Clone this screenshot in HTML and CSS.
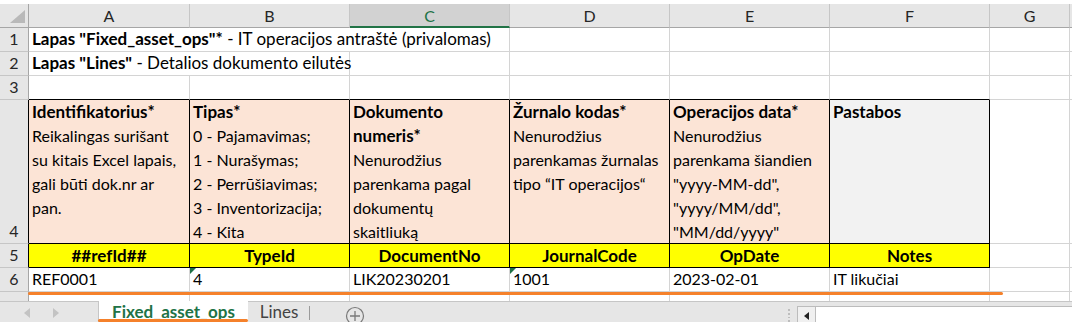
FILE: index.html
```html
<!DOCTYPE html>
<html lang="lt">
<head>
<meta charset="utf-8">
<title>Fixed_asset_ops</title>
<link rel="stylesheet" href="styles.css">
</head>
<body>
<div class="app">
  <div class="sheet">
    <!-- column headers -->
    <div class="corner"><span class="corner-tri"></span></div>
    <div class="ch">A</div>
    <div class="ch">B</div>
    <div class="ch sel">C</div>
    <div class="ch">D</div>
    <div class="ch">E</div>
    <div class="ch">F</div>
    <div class="ch">G</div>
    <div class="ch last"></div>

    <!-- row 1 -->
    <div class="rh">1</div>
    <div class="c span3 intro"><span><b>Lapas "Fixed_asset_ops"*</b> - IT operacijos antraštė (privalomas)</span></div>
    <div class="c"></div><div class="c"></div><div class="c"></div><div class="c"></div><div class="c last"></div>

    <!-- row 2 -->
    <div class="rh">2</div>
    <div class="c span2 intro"><span><b>Lapas "Lines"</b> - Detalios dokumento eilutės</span></div>
    <div class="c"></div><div class="c"></div><div class="c"></div><div class="c"></div><div class="c"></div><div class="c last"></div>

    <!-- row 3 -->
    <div class="rh">3</div>
    <div class="c bb"></div><div class="c bb"></div><div class="c bb"></div><div class="c bb"></div><div class="c bb"></div><div class="c bb"></div>
    <div class="c"></div><div class="c last"></div>

    <!-- row 4 -->
    <div class="rh dark">4</div>
    <div class="c desc"><b>Identifikatorius*</b><br>Reikalingas surišant<br>su kitais Excel lapais,<br>gali būti dok.nr ar<br>pan.</div>
    <div class="c desc"><b>Tipas*</b><br>0 - Pajamavimas;<br>1 - Nurašymas;<br>2 - Perrūšiavimas;<br>3 - Inventorizacija;<br>4 - Kita</div>
    <div class="c desc"><b>Dokumento<br>numeris*</b><br>Nenurodžius<br>parenkama pagal<br>dokumentų<br>skaitliuką</div>
    <div class="c desc"><b>Žurnalo kodas*</b><br>Nenurodžius<br>parenkamas žurnalas<br>tipo “IT operacijos“</div>
    <div class="c desc"><b>Operacijos data*</b><br>Nenurodžius<br>parenkama šiandien<br>"yyyy-MM-dd",<br>"yyyy/MM/dd",<br>"MM/dd/yyyy"</div>
    <div class="c desc opt"><b>Pastabos</b></div>
    <div class="c"></div><div class="c last"></div>

    <!-- row 5 -->
    <div class="rh dark">5</div>
    <div class="c key">##refId##</div>
    <div class="c key">TypeId</div>
    <div class="c key">DocumentNo</div>
    <div class="c key">JournalCode</div>
    <div class="c key">OpDate</div>
    <div class="c key">Notes</div>
    <div class="c"></div><div class="c last"></div>

    <!-- row 6 -->
    <div class="rh">6</div>
    <div class="c">REF0001</div>
    <div class="c txtnum">4</div>
    <div class="c">LIK20230201</div>
    <div class="c txtnum">1001</div>
    <div class="c">2023-02-01</div>
    <div class="c">IT likučiai</div>
    <div class="c"></div><div class="c last"></div>

    <!-- row 7 -->
    <div class="rh part">7</div>
    <div class="c"></div><div class="c"></div><div class="c"></div><div class="c"></div><div class="c"></div><div class="c"></div><div class="c"></div><div class="c last"></div>
  </div>

  <div class="tabs">
    <div class="nav">
      <span class="arr arr-l"></span>
      <span class="arr arr-r"></span>
    </div>
    <div class="tab active">Fixed_asset_ops</div>
    <div class="tab">Lines</div>
    <div class="add">
      <svg width="20" height="20" viewBox="0 0 20 20">
        <circle cx="10" cy="10" r="8.5" fill="none" stroke="#7a7a7a" stroke-width="1.2"/>
        <path d="M10 5v10M5 10h10" stroke="#7a7a7a" stroke-width="1.3"/>
      </svg>
    </div>
    <div class="spacer"></div>
    <div class="split"><i></i><i></i><i></i><i></i></div>
    <div class="hscroll">
      <div class="sbtn"><span class="sarr"></span></div>
    </div>
  </div>

  <div class="mark mark-row"></div>
  <div class="mark mark-tab"></div>
</div>
</body>
</html>
```

FILE: styles.css
```css
* { box-sizing: border-box; }

html, body {
  margin: 0;
  padding: 0;
  background: #ffffff;
}

body {
  width: 1072px;
  height: 322px;
  overflow: hidden;
  font-family: Lato, "Open Sans", sans-serif;
  font-size: 16px;
  color: #000;
}

b { font-size: 17px; }

.app {
  position: relative;
  width: 1072px;
  height: 322px;
  overflow: hidden;
}

.sheet {
  display: grid;
  grid-template-columns: 29px 161px 160px 160px 160px 160px 160px 80px 1fr;
  grid-template-rows: 24px 24px 24px 24px 144px 24px 24px 24px;
  padding-top: 4px;
  height: 301px;
  overflow: hidden;
  line-height: 24px;
}

/* header */
.corner {
  position: relative;
  background: #e6e6e6;
  border-right: 1px solid #a6a6a6;
  border-bottom: 1px solid #a6a6a6;
}
.corner-tri {
  position: absolute;
  right: 3px;
  bottom: 4px;
  width: 0;
  height: 0;
  border-left: 15px solid transparent;
  border-bottom: 13px solid #b9b9b9;
}

.ch {
  background: #e6e6e6;
  border-right: 1px solid #c6c6c6;
  border-bottom: 1px solid #a6a6a6;
  text-align: center;
  color: #262626;
  line-height: 23px;
}
.ch.sel {
  background: #d2d2d2;
  color: #217346;
  border-bottom: 2px solid #217346;
}
.ch.last { border-right: 0; }

.rh {
  background: #e6e6e6;
  border-right: 1px solid #a6a6a6;
  border-bottom: 1px solid #c6c6c6;
  text-align: center;
  color: #262626;
  display: flex;
  align-items: flex-end;
  justify-content: center;
}
.rh.dark { border-right-color: #000; }
.rh.part { align-items: flex-start; line-height: 24px; padding-top: 6px; }

/* cells */
.c {
  position: relative;
  border-right: 1px solid #d4d4d4;
  border-bottom: 1px solid #d4d4d4;
  padding: 0 3px;
  white-space: nowrap;
  overflow: visible;
  display: flex;
  align-items: flex-end;
}
.c.last { border-right: 0; }
.c.span3 { grid-column: span 3; }
.c.span2 { grid-column: span 2; }
.c.bb { border-bottom-color: #000; }
.c.intro { font-size: 17px; }

.c.desc {
  display: block;
  background: #fce4d6;
  border-right-color: #000;
  border-bottom-color: #000;
  padding: 0 3px;
}
.c.desc.opt { background: #f2f2f2; }

.c.key {
  background: #ffff00;
  border-right-color: #000;
  border-bottom-color: #000;
  font-weight: bold;
  font-size: 17px;
  justify-content: center;
  align-items: center;
}

.c.txtnum::before {
  content: "";
  position: absolute;
  left: 0;
  top: 0;
  width: 0;
  height: 0;
  border-top: 6px solid #1e7145;
  border-right: 6px solid transparent;
}

/* sheet tabs */
.tabs {
  display: flex;
  height: 21px;
  background: #e6e6e6;
  border-top: 1px solid #c6c6c6;
  line-height: 20px;
}

.nav {
  position: relative;
  width: 98px;
  flex: none;
}
.arr {
  position: absolute;
  top: 6px;
  width: 0;
  height: 0;
  border-top: 5px solid transparent;
  border-bottom: 5px solid transparent;
}
.arr-l { left: 24px; border-right: 6px solid #c3c3c3; }
.arr-r { left: 53px; border-left: 6px solid #c3c3c3; }

.tab {
  flex: none;
  text-align: center;
  color: #444;
  font-size: 17px;
}
.tab.active {
  width: 150px;
  background: #ffffff;
  color: #217346;
  font-weight: bold;
  border-left: 1px solid #c6c6c6;
  margin-top: -1px;
  line-height: 21px;
}
.tab:not(.active) {
  width: 62px;
  position: relative;
}
.tab:not(.active)::after {
  content: "";
  position: absolute;
  right: 0;
  top: 4px;
  bottom: 2px;
  width: 1px;
  background: #9b9b9b;
}

.add {
  flex: none;
  width: 30px;
  margin-left: 30px;
  padding-top: 4px;
  display: flex;
  justify-content: center;
}

.spacer { flex: 1; }

.split {
  flex: none;
  width: 17px;
  display: flex;
  flex-direction: column;
  align-items: center;
  padding-top: 7px;
  gap: 2px;
}
.split i {
  display: block;
  width: 2px;
  height: 2px;
  background: #bdbdbd;
}

.hscroll {
  flex: none;
  width: 275px;
  margin-top: 4px;
  background: #ffffff;
  border-left: 1px solid #bcbcbc;
  border-top: 1px solid #bcbcbc;
  display: flex;
}
.sbtn {
  width: 18px;
  border-right: 1px solid #bcbcbc;
  background: #f0f0f0;
  position: relative;
}
.sarr {
  position: absolute;
  left: 6px;
  top: 5px;
  width: 0;
  height: 0;
  border-top: 4px solid transparent;
  border-bottom: 4px solid transparent;
  border-right: 5px solid #222;
}

/* annotation marks drawn over the screenshot */
.mark {
  position: absolute;
  background: #f5812b;
  border-radius: 2px;
}
.mark-row {
  left: 28px;
  top: 292px;
  width: 975px;
  height: 3px;
}
.mark-tab {
  left: 98px;
  top: 319px;
  width: 150px;
  height: 3px;
}
```
